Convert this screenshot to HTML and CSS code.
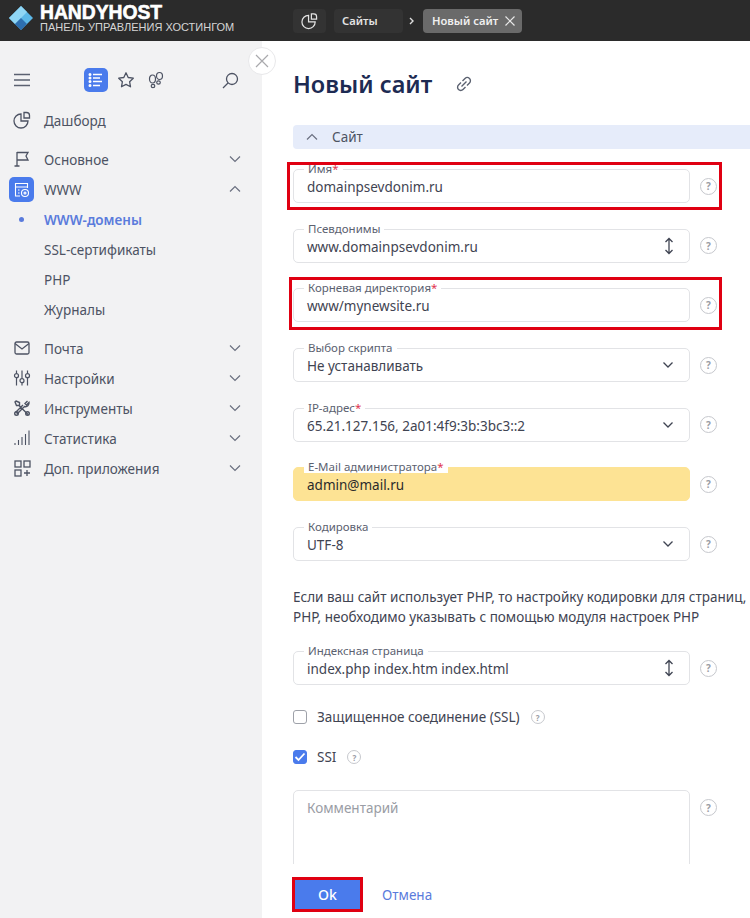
FILE: index.html
```html
<!DOCTYPE html>
<html lang="en">
<head>
    <meta charset="UTF-8">
    <meta name="viewport" content="width=device-width, initial-scale=1.0">
    <title>Новый сайт</title>
    <link rel="stylesheet" href="styles.css">
</head>
<body>
    <header class="topbar">
        <div class="brand">
            <svg class="brand-logo" width="26" height="26" viewBox="0 0 26 26">
                <path d="M13 1 25 13 13 25 1 13Z" fill="#5cb8e8"/>
                <path d="M13 1 19 7 7 19 1 13Z" fill="#8fd6f5"/>
                <path d="M7 19 13 13 19 19 13 25Z" fill="#2d6fb0"/>
            </svg>
            <div class="brand-text">
                <div class="brand-name">HANDYHOST</div>
                <div class="brand-sub">ПАНЕЛЬ УПРАВЛЕНИЯ ХОСТИНГОМ</div>
            </div>
        </div>
        <nav class="crumbs">
            <div class="crumb crumb-icon">
                <svg width="18" height="18" viewBox="0 0 18 18" fill="none" stroke="#e4e4e4" stroke-width="1.3"><path d="M8 3a7 7 0 1 0 7 7H8Z"/><path d="M11 1.500h2.500a3 3 0 0 1 3 3V7H11Z"/></svg>
            </div>
            <div class="crumb">Сайты</div>
            <svg class="crumb-sep" width="8" height="10" viewBox="0 0 8 10" fill="none" stroke="#ddd" stroke-width="1.4"><path d="M2 2l3 3-3 3"/></svg>
            <div class="crumb crumb-active">Новый сайт
                <svg width="12" height="12" viewBox="0 0 12 12" fill="none" stroke="#e8e8e8" stroke-width="1.2"><path d="M1.500 1.500l9 9M10.500 1.500l-9 9"/></svg>
            </div>
        </nav>
    </header>

    <div class="layout">
        <aside class="sidebar">
            <button class="close-btn">
                <svg width="16" height="16" viewBox="0 0 16 16" fill="none" stroke="#a9a9ad" stroke-width="1.2"><path d="M2 2l12 12M14 2 2 14"/></svg>
            </button>
            <div class="tools">
                <svg class="tool-menu" width="16" height="14" viewBox="0 0 16 14" fill="none" stroke="#5b6170" stroke-width="1.300"><path d="M0 1.500h16M0 7h16M0 12.500h16"/></svg>
                <div class="tool-active">
                    <svg width="16" height="16" viewBox="0 0 16 16" fill="none" stroke="#fff" stroke-width="1.400"><path d="M5 2.500h9M5 6h7M5 9.500h9M5 13.500h7"/><circle cx="2" cy="2.500" r=".8"/><circle cx="2" cy="6" r=".8"/><circle cx="2" cy="9.500" r=".8"/><circle cx="2" cy="13.500" r=".8"/></svg>
                </div>
                <svg class="tool-star" width="18" height="18" viewBox="0 0 18 18" fill="none" stroke="#4d5363" stroke-width="1.300" stroke-linejoin="round"><path d="M9 1.800l2.200 4.700 5.100.7-3.700 3.500.9 5.100L9 13.400l-4.500 2.400.9-5.100-3.700-3.500 5.100-.7Z"/></svg>
                <svg class="tool-steps" width="16" height="18" viewBox="0 0 16 18" fill="none" stroke="#4d5363" stroke-width="1.200"><ellipse cx="4.500" cy="8" rx="3" ry="4"/><ellipse cx="5" cy="15" rx="1.800" ry="1.600"/><ellipse cx="11.500" cy="5" rx="3" ry="3.500"/><ellipse cx="10.500" cy="11.500" rx="1.800" ry="1.600"/></svg>
                <svg class="tool-search" width="17" height="17" viewBox="0 0 17 17" fill="none" stroke="#4d5363" stroke-width="1.300"><circle cx="10" cy="7" r="5.500"/><path d="M6 11l-5 5"/></svg>
            </div>

            <a class="nav-item nav-dash">
                <svg class="nav-icon" width="18" height="18" viewBox="0 0 18 18" fill="none" stroke="#4d5363" stroke-width="1.300"><path d="M8 3a7 7 0 1 0 7 7H8Z"/><path d="M11 1.500h2.500a3 3 0 0 1 3 3V7H11Z"/></svg>
                Дашборд
            </a>

            <div class="nav-group">
                <a class="nav-item">
                    <svg class="nav-icon" width="18" height="18" viewBox="0 0 18 18" fill="none" stroke="#4d5363" stroke-width="1.300"><path d="M4 2v14M1.500 16h5M4 2.500h11l-2 3.500 2 4H4"/></svg>
                    Основное
                    <svg class="chevron" width="12" height="8" viewBox="0 0 12 8" fill="none" stroke="#6b7080" stroke-width="1.200"><path d="M1 1.500l5 5 5-5"/></svg>
                </a>
                <a class="nav-item">
                    <span class="nav-icon-active">
                        <svg width="16" height="16" viewBox="0 0 16 16" fill="none" stroke="#fff" stroke-width="1.100"><path d="M6 14H1.500V1.500h12V6M1.500 5h12M4 8h1.500M4 11h1.500"/><circle cx="11" cy="11" r="3.500"/><circle cx="11" cy="11" r="1"/></svg>
                    </span>
                    WWW
                    <svg class="chevron" width="12" height="8" viewBox="0 0 12 8" fill="none" stroke="#6b7080" stroke-width="1.200"><path d="M1 6.500l5-5 5 5"/></svg>
                </a>
                <a class="nav-item nav-sub nav-current">WWW-домены</a>
                <a class="nav-item nav-sub">SSL-сертификаты</a>
                <a class="nav-item nav-sub">PHP</a>
                <a class="nav-item nav-sub">Журналы</a>
            </div>

            <div class="nav-group nav-group-last">
                <a class="nav-item">
                    <svg class="nav-icon" width="18" height="18" viewBox="0 0 18 18" fill="none" stroke="#4d5363" stroke-width="1.300"><rect x="2" y="3" width="14" height="12" rx="1.500"/><path d="M2 4.500l7 5.500 7-5.500"/></svg>
                    Почта
                    <svg class="chevron" width="12" height="8" viewBox="0 0 12 8" fill="none" stroke="#6b7080" stroke-width="1.200"><path d="M1 1.500l5 5 5-5"/></svg>
                </a>
                <a class="nav-item">
                    <svg class="nav-icon" width="18" height="18" viewBox="0 0 18 18" fill="none" stroke="#4d5363" stroke-width="1.200"><path d="M3.500 1.500v3M3.500 9v7.500M9 1.500v8M9 14v2.500M14.500 1.500v3M14.500 9v7.500"/><circle cx="3.500" cy="6.700" r="2"/><circle cx="9" cy="11.700" r="2"/><circle cx="14.500" cy="6.700" r="2"/></svg>
                    Настройки
                    <svg class="chevron" width="12" height="8" viewBox="0 0 12 8" fill="none" stroke="#6b7080" stroke-width="1.200"><path d="M1 1.500l5 5 5-5"/></svg>
                </a>
                <a class="nav-item">
                    <svg class="nav-icon" width="18" height="18" viewBox="0 0 18 18" fill="none" stroke="#4d5363" stroke-width="1.400"><path d="M6 6.500l9 9M3 2l3.500 1.500v3H3.500L2 3ZM14.500 2l-2.500 2.500 1.500 1.500L16 3.500a3.500 3.500 0 0 1-4.500 4L4.500 14.500 3 13l7-7"/><circle cx="3.500" cy="14.500" r="1.800"/><circle cx="14.500" cy="14.500" r="1.800"/></svg>
                    Инструменты
                    <svg class="chevron" width="12" height="8" viewBox="0 0 12 8" fill="none" stroke="#6b7080" stroke-width="1.200"><path d="M1 1.500l5 5 5-5"/></svg>
                </a>
                <a class="nav-item">
                    <svg class="nav-icon" width="18" height="18" viewBox="0 0 18 18" fill="none" stroke="#4d5363" stroke-width="1.100"><path d="M2 16v-2M5.500 16v-5M9 16V8M12.500 16V5M16 16V1.500"/></svg>
                    Статистика
                    <svg class="chevron" width="12" height="8" viewBox="0 0 12 8" fill="none" stroke="#6b7080" stroke-width="1.200"><path d="M1 1.500l5 5 5-5"/></svg>
                </a>
                <a class="nav-item">
                    <svg class="nav-icon" width="18" height="18" viewBox="0 0 18 18" fill="none" stroke="#4d5363" stroke-width="1.300"><rect x="2" y="2" width="6" height="6"/><rect x="11" y="2" width="6" height="6"/><rect x="2" y="11" width="6" height="6"/><path d="M14 11v6M11 14h6"/></svg>
                    Доп. приложения
                    <svg class="chevron" width="12" height="8" viewBox="0 0 12 8" fill="none" stroke="#6b7080" stroke-width="1.200"><path d="M1 1.500l5 5 5-5"/></svg>
                </a>
            </div>
        </aside>

        <main class="main">
            <div class="main-scroll">
                <div class="title-row">
                    <h1>Новый сайт</h1>
                    <svg width="16" height="16" viewBox="0 0 16 16" fill="none" stroke="#5b6170" stroke-width="1.400"><path d="M6.500 5 9 2.500a2.800 2.800 0 0 1 4.500 4.500L11 9.500M9.500 11 7 13.500A2.800 2.800 0 0 1 2.500 9L5 6.500M5.500 10.500l5-5"/></svg>
                </div>
                <div class="section-bar">
                    <svg width="12" height="8" viewBox="0 0 12 8" fill="none" stroke="#6b7080" stroke-width="1.200"><path d="M1 6.500l5-5 5 5"/></svg>
                    Сайт
                </div>

                <div class="form-rows">
                    <div class="row">
                        <div class="field"><span class="field-label">Имя<i>*</i></span>domainpsevdonim.ru</div>
                        <span class="help">?</span>
                        <div class="mark mark-name"></div>
                    </div>
                    <div class="row">
                        <div class="field"><span class="field-label">Псевдонимы</span>www.domainpsevdonim.ru
                            <svg class="field-icon" width="10" height="18" viewBox="0 0 10 18" fill="none" stroke="#3f4452" stroke-width="1.300"><path d="M5 1.500v15M1.500 5 5 1.500 8.500 5M1.500 13 5 16.500 8.500 13"/></svg>
                        </div>
                        <span class="help">?</span>
                    </div>
                    <div class="row">
                        <div class="field"><span class="field-label">Корневая директория<i>*</i></span>www/mynewsite.ru</div>
                        <span class="help">?</span>
                        <div class="mark mark-root"></div>
                    </div>
                    <div class="row">
                        <div class="field"><span class="field-label">Выбор скрипта</span>Не устанавливать
                            <svg class="field-icon" width="12" height="8" viewBox="0 0 12 8" fill="none" stroke="#3f4452" stroke-width="1.300"><path d="M1.500 1.500 6 6l4.500-4.500"/></svg>
                        </div>
                        <span class="help">?</span>
                    </div>
                    <div class="row">
                        <div class="field"><span class="field-label">IP-адрес<i>*</i></span>65.21.127.156, 2a01:4f9:3b:3bc3::2
                            <svg class="field-icon" width="12" height="8" viewBox="0 0 12 8" fill="none" stroke="#3f4452" stroke-width="1.300"><path d="M1.500 1.500 6 6l4.500-4.500"/></svg>
                        </div>
                        <span class="help">?</span>
                    </div>
                    <div class="row">
                        <div class="field field-filled"><span class="field-label">E-Mail администратора<i>*</i></span>admin@mail.ru</div>
                        <span class="help">?</span>
                    </div>
                    <div class="row">
                        <div class="field"><span class="field-label">Кодировка</span>UTF-8
                            <svg class="field-icon" width="12" height="8" viewBox="0 0 12 8" fill="none" stroke="#3f4452" stroke-width="1.300"><path d="M1.500 1.500 6 6l4.500-4.500"/></svg>
                        </div>
                        <span class="help">?</span>
                    </div>
                </div>

                <p class="note">Если ваш сайт использует PHP, то настройку кодировки для страниц,<br>PHP, необходимо указывать с помощью модуля настроек PHP</p>

                <div class="row">
                    <div class="field"><span class="field-label">Индексная страница</span>index.php index.htm index.html
                        <svg class="field-icon" width="10" height="18" viewBox="0 0 10 18" fill="none" stroke="#3f4452" stroke-width="1.300"><path d="M5 1.500v15M1.500 5 5 1.500 8.500 5M1.500 13 5 16.500 8.500 13"/></svg>
                    </div>
                    <span class="help">?</span>
                </div>

                <div class="check-row check-ssl">
                    <span class="checkbox"></span>
                    Защищенное соединение (SSL)
                    <span class="help help-small">?</span>
                </div>
                <div class="check-row check-ssi">
                    <span class="checkbox checkbox-on">
                        <svg width="12" height="10" viewBox="0 0 12 10" fill="none" stroke="#fff" stroke-width="1.800"><path d="M1.500 5 4.500 8 10.500 1.500"/></svg>
                    </span>
                    SSI
                    <span class="help help-small">?</span>
                </div>

                <div class="row row-comment">
                    <div class="field field-area">Комментарий</div>
                    <span class="help">?</span>
                </div>
            </div>

            <footer class="actions">
                <button class="btn-ok">Ok</button>
                <a class="btn-cancel">Отмена</a>
            </footer>
        </main>
    </div>
</body>
</html>
```

FILE: styles.css
```css
* {
    box-sizing: border-box;
}

body {
    margin: 0;
    height: 918px;
    overflow: hidden;
    display: flex;
    flex-direction: column;
    font-family: 'Noto Sans', sans-serif;
    font-size: 13.500px;
    color: #3f4452;
    background: #fff;
}

/* Top bar */
.topbar {
    height: 41px;
    flex-shrink: 0;
    display: flex;
    align-items: center;
    background: #2b2b2b;
}

.brand {
    width: 293px;
    padding-left: 8px;
    display: flex;
    align-items: center;
    gap: 6px;
}

.brand-logo {
    margin-bottom: 5px;
}

.brand-text {
    margin-bottom: 5px;
}

.brand-name {
    font-family: 'Liberation Sans', sans-serif;
    font-size: 19.300px;
    font-weight: bold;
    line-height: 18px;
    color: #fff;
    -webkit-text-stroke: 0.6px #fff;
}

.brand-sub {
    font-family: 'Liberation Sans', sans-serif;
    font-size: 11px;
    line-height: 10px;
    white-space: nowrap;
    color: #d6d6d6;
}

.crumbs {
    display: flex;
    align-items: center;
}

.crumb {
    height: 24px;
    padding: 0 8px;
    margin-right: 8px;
    display: flex;
    align-items: center;
    width: 69px;
    border-radius: 4px;
    background: #333;
    font-size: 11.200px;
    font-weight: 600;
    color: #e4e4e4;
}

.crumb-icon {
    width: 33px;
}

.crumb-sep {
    margin: 0 7px 0 -3px;
}

.crumb-active {
    width: 99px;
    margin-right: 0;
    padding: 0 6px 0 9px;
    justify-content: space-between;
    background: #6a6a6a;
    color: #f0f0f0;
    white-space: nowrap;
}

.layout {
    flex: 1;
    min-height: 0;
    display: flex;
}

/* Sidebar */
.sidebar {
    position: relative;
    width: 262px;
    flex-shrink: 0;
    padding-top: 27px;
    background: #f2f2f3;
}

.close-btn {
    position: absolute;
    top: 6px;
    right: -14px;
    width: 28px;
    height: 28px;
    padding: 0;
    display: flex;
    align-items: center;
    justify-content: center;
    border: 1px solid #e8e8ea;
    border-radius: 50%;
    background: #fff;
}

.tools {
    height: 24px;
    position: relative;
    display: flex;
    align-items: center;
    padding-left: 14px;
}

.tool-active {
    width: 24px;
    height: 24px;
    margin-left: 54px;
    display: flex;
    align-items: center;
    justify-content: center;
    border-radius: 5px;
    background: #4a7bec;
}

.tool-star {
    margin-left: 9px;
}

.tool-steps {
    margin-left: 13px;
}

.tool-search {
    margin-left: 58px;
}

.nav-item {
    height: 30px;
    padding: 2px 0 0 44px;
    position: relative;
    display: flex;
    align-items: center;
    color: #4d5363;
    white-space: nowrap;
}

.nav-dash {
    margin-top: 13px;
}

.nav-icon {
    position: absolute;
    left: 13px;
    top: 6px;
}

.nav-icon-active {
    position: absolute;
    left: 9px;
    top: 3px;
    width: 25px;
    height: 25px;
    display: flex;
    align-items: center;
    justify-content: center;
    border-radius: 5px;
    background: #4a7bec;
}

.chevron {
    position: absolute;
    left: 229px;
    top: 11px;
}

.nav-group {
    margin-top: 9px;
}

.nav-current {
    font-weight: 600;
    color: #5a7bdc;
}

.nav-current::before {
    content: "";
    position: absolute;
    left: 19px;
    top: 13px;
    width: 5px;
    height: 5px;
    border-radius: 50%;
    background: #5a7bdc;
}

/* Main */
.main {
    flex: 1;
    min-width: 0;
    display: flex;
    flex-direction: column;
    overflow: hidden;
}

.main-scroll {
    height: 823px;
    flex-shrink: 0;
    overflow: hidden;
    padding-left: 31px;
}

.title-row {
    height: 84px;
    padding-top: 2px;
    display: flex;
    align-items: center;
    gap: 24px;
}

h1 {
    margin: 0;
    font-size: 23.500px;
    font-weight: 600;
    color: #1d2b53;
}

.section-bar {
    height: 24px;
    margin-bottom: 20px;
    padding-left: 13px;
    display: flex;
    align-items: center;
    gap: 14px;
    border-radius: 4px 0 0 4px;
    background: #e6ecfa;
    color: #4d5363;
}

.form-rows {
    display: flex;
    flex-direction: column;
    gap: 25.7px;
}

.row {
    position: relative;
    width: 424px;
    display: flex;
    align-items: center;
    justify-content: space-between;
}

.field {
    position: relative;
    width: 397px;
    height: 34px;
    padding: 8px 13px 0;
    border: 1px solid #e2e3e6;
    border-radius: 5px;
    background: #fff;
    line-height: 19px;
    white-space: nowrap;
    color: #3f4452;
}

.field-label {
    position: absolute;
    top: -8px;
    left: 10px;
    padding: 0 4px;
    background: #fff;
    font-size: 11.500px;
    line-height: 13px;
    color: #5b6170;
}

.field-label i {
    font-style: normal;
    color: #e0344f;
}

.field-filled {
    border-color: #fde394;
    background: #fde394;
    color: #2b2b2b;
}

.field-icon {
    position: absolute;
    right: 15px;
    top: 50%;
    transform: translateY(-50%);
}

.help {
    width: 17px;
    height: 17px;
    flex-shrink: 0;
    display: flex;
    align-items: center;
    justify-content: center;
    border: 1.500px solid #c6c8cd;
    border-radius: 50%;
    font-size: 10px;
    font-weight: 700;
    color: #9a9da5;
}

.help-small {
    width: 14px;
    height: 14px;
    margin-left: 11px;
    border-width: 1px;
    font-size: 8px;
}

/* Red annotation frames */
.mark {
    position: absolute;
    left: -6px;
    right: -5px;
    border: 3px solid #e00012;
    pointer-events: none;
}

.mark-name {
    top: -7px;
    bottom: -7px;
}

.mark-root {
    top: -11px;
    bottom: -8px;
    left: -4px;
}

.note {
    margin: 26px 0 24px;
    line-height: 20px;
    white-space: nowrap;
    color: #3f4452;
}

.check-row {
    display: flex;
    align-items: center;
    white-space: nowrap;
}

.check-ssl {
    margin-top: 23px;
}

.check-ssi {
    margin-top: 22px;
}

.checkbox {
    width: 14px;
    height: 14px;
    margin-right: 10px;
    display: flex;
    align-items: center;
    justify-content: center;
    border: 1px solid #9ea1a9;
    border-radius: 3px;
    background: #fff;
}

.checkbox-on {
    border-color: #4a7bec;
    background: #4a7bec;
}

.row-comment {
    margin-top: 24px;
    align-items: flex-start;
}

.row-comment .help {
    margin-top: 9px;
}

.field-area {
    height: 90px;
    color: #9a9da5;
}

/* Footer actions */
.actions {
    flex: 1;
    padding: 13px 0 0 30px;
    display: flex;
    align-items: flex-start;
    gap: 19px;
    background: #fff;
}

.btn-ok {
    width: 71px;
    height: 35px;
    padding: 0;
    border: 3px solid #e00012;
    background: #4a7bec;
    font-family: inherit;
    font-size: 14px;
    font-weight: 500;
    color: #fff;
}

.btn-cancel {
    line-height: 36px;
    color: #5a7bdc;
}
```
